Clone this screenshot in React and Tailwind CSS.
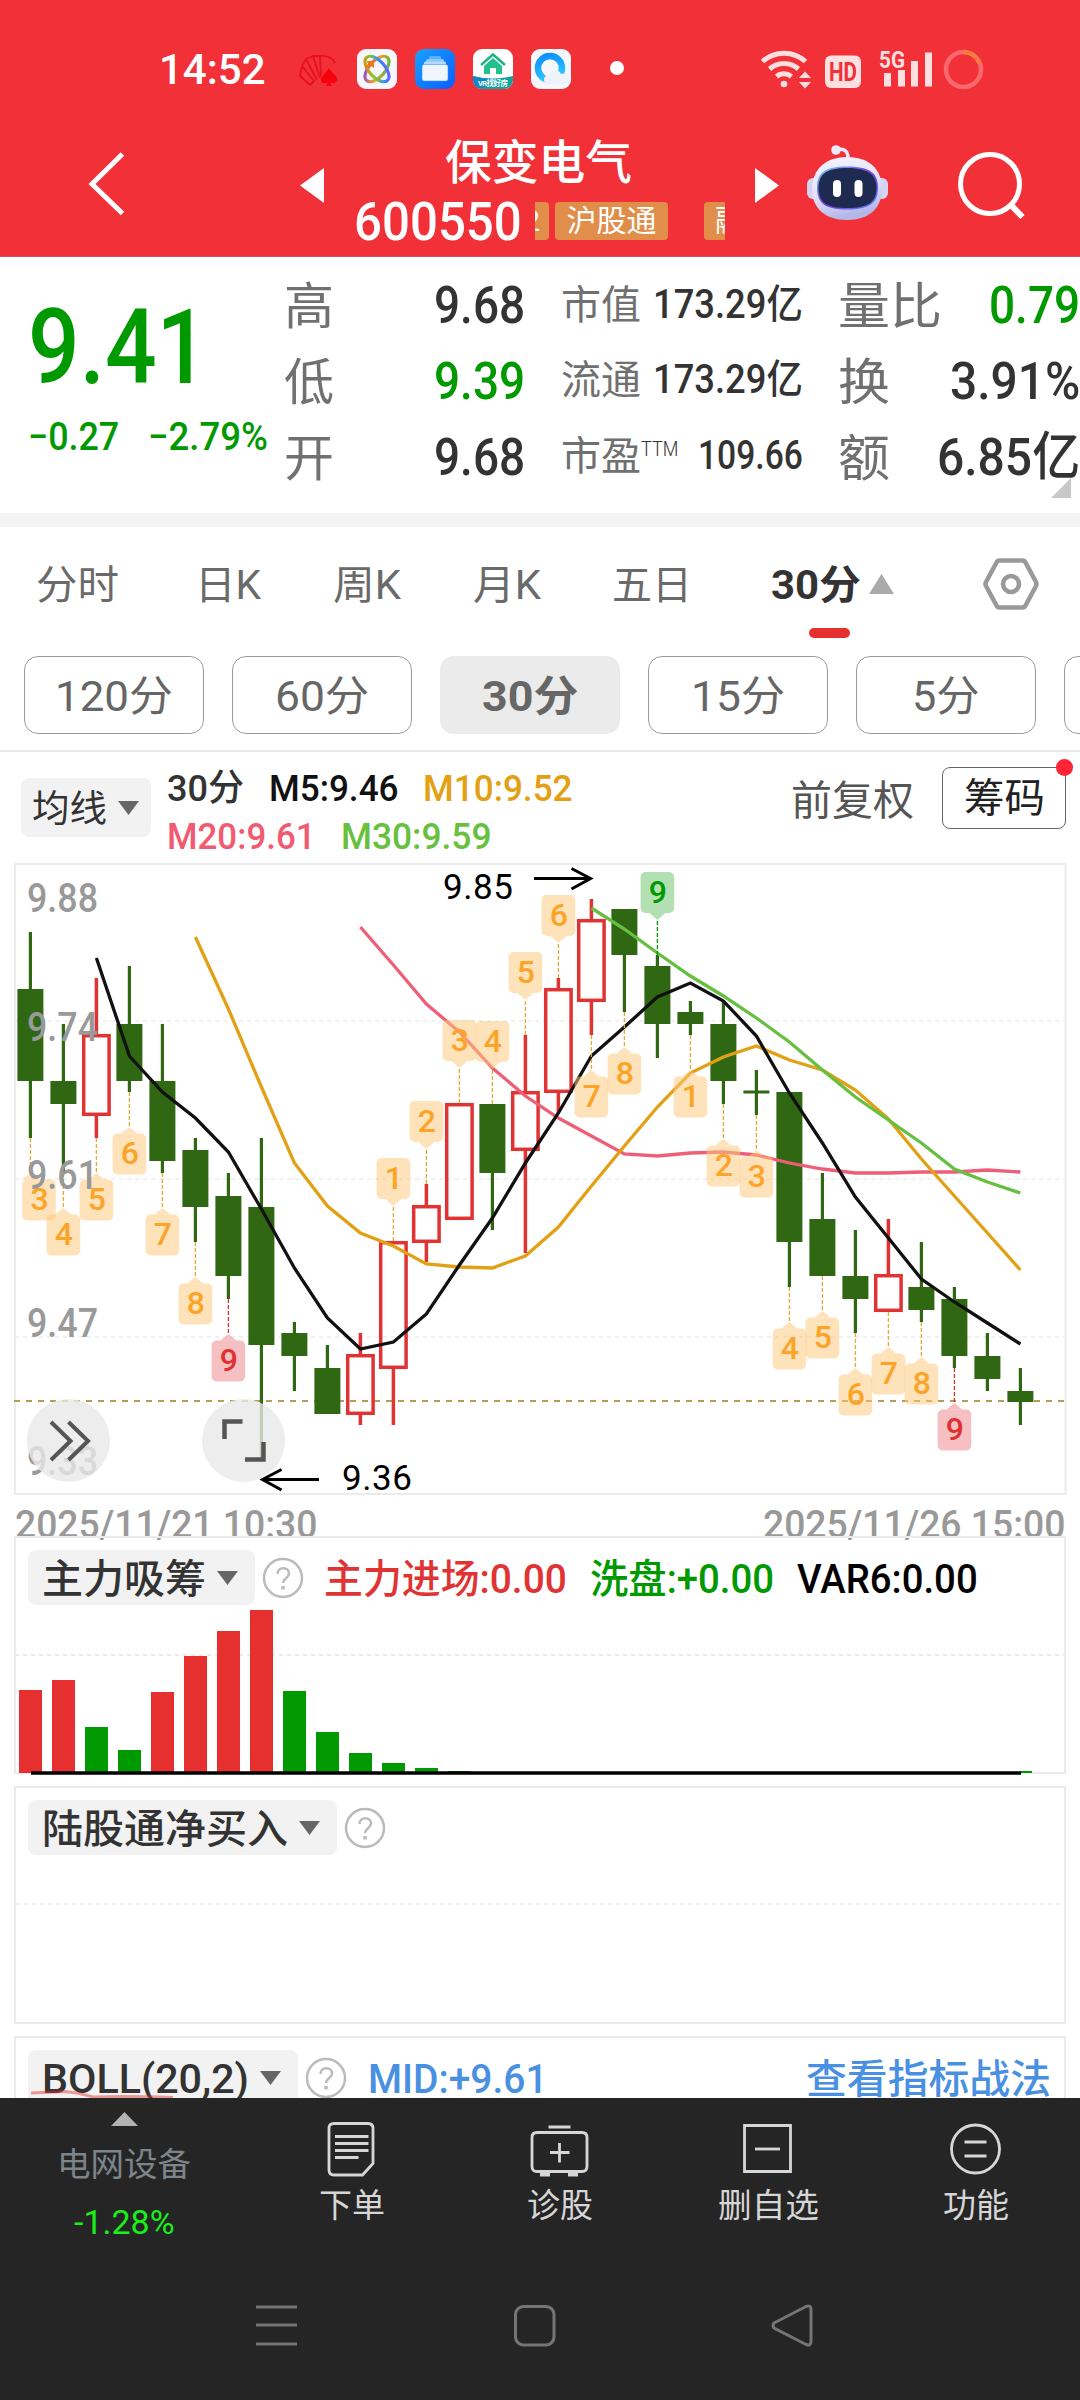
import { useLayoutEffect, useRef, useState } from 'react';
import { clsx } from 'clsx';

// squeezes a line of text into a fixed width, like the condensed DIN numerals of the app
const Fit = ({ w, className, children }) => {
  const ref = useRef(null);
  const [scale, setScale] = useState(1);

  useLayoutEffect(() => {
    setScale(w / ref.current.offsetWidth);
  }, [w]);

  return (
    <span className={clsx('block shrink-0 leading-none', className)} style={{ width: w }}>
      <span ref={ref} className="inline-block origin-left whitespace-nowrap" style={{ transform: `translateY(1px) scaleX(${scale})` }}>
        {children}
      </span>
    </span>
  );
};

const StatusBar = () => (
  <div className="flex h-[138px] items-center pl-[159px]">
    <Fit w={107} className="text-[42px] font-medium text-white">14:52</Fit>
    <svg className="ml-[32px] h-[44px] w-[330px]" viewBox="298 48 330 44">
      <defs>
        <linearGradient id="card" x1="0" y1="0" x2="1" y2="1">
          <stop offset="0" stopColor="#16a3ff" />
          <stop offset="1" stopColor="#0a5cff" />
        </linearGradient>
        <linearGradient id="rainbow" x1="0" y1="0" x2="1" y2="1">
          <stop offset="0" stopColor="#ff7a1a" />
          <stop offset="0.35" stopColor="#8bc926" />
          <stop offset="0.65" stopColor="#2f8cff" />
          <stop offset="1" stopColor="#8a4bff" />
        </linearGradient>
        <linearGradient id="rainbow2" x1="1" y1="0" x2="0" y2="1">
          <stop offset="0" stopColor="#2fc04b" />
          <stop offset="0.5" stopColor="#f0a020" />
          <stop offset="1" stopColor="#7a3cff" />
        </linearGradient>
        <linearGradient id="ring" x1="0" y1="0" x2="0.3" y2="1">
          <stop offset="0" stopColor="#0a8dff" />
          <stop offset="1" stopColor="#2fc6ff" />
        </linearGradient>
        <clipPath id="vr"><rect x="473" y="50" width="40" height="40" rx="9" /></clipPath>
      </defs>
      <g stroke="#e8101a" fill="none" strokeWidth="1.800" strokeLinejoin="round">
        <path d="M300 77l2-10 12 15-4 4zM302 67l4-7 11 21M306 60l7-3 7 22M313 57l7 0 1 20M320 57c8-1 13 3 15 7" />
        <path d="M329 69c-3 5-8 8-8 12 0 4 5 4 7 2l-2 4h6l-2-4c3 2 7 1 7-3 0-4-6-6-8-11z" fill="#f5000c" stroke="none" />
      </g>
      <rect x="357" y="50" width="40" height="40" rx="9" fill="#f7f7fb" />
      <g fill="none" strokeWidth="3.200">
        <ellipse cx="377" cy="70" rx="8" ry="15.500" transform="rotate(42 377 70)" stroke="url(#rainbow2)" />
        <ellipse cx="377" cy="70" rx="8" ry="15.500" transform="rotate(-42 377 70)" stroke="url(#rainbow)" />
      </g>
      <path d="M367 62h7v7l-3-2-4 3-2-2 3-3z" fill="#f07818" />
      <rect x="415" y="50" width="40" height="40" rx="9" fill="url(#card)" />
      <rect x="429" y="57" width="12" height="4" rx="1.5" fill="#5fb2ff" />
      <rect x="426" y="60" width="18" height="4" rx="1.500" fill="#8cc6ff" />
      <rect x="424" y="62.500" width="22" height="4" rx="1.500" fill="#b5daff" />
      <rect x="422" y="65.500" width="26" height="16.500" rx="2" fill="#f0f6ff" stroke="#3c90ff" strokeWidth="0.600" />
      <g clipPath="url(#vr)">
        <rect x="473" y="50" width="40" height="40" fill="#fff" />
        <path d="M473 77q20 5 40 0v14h-40z" fill="#12a3a0" />
        <path d="M473 77q9 3 18 3l-10 10h-8z" fill="#1287c8" />
        <path d="M481 66l12-10.500 12 10.500" fill="none" stroke="#22b184" strokeWidth="2.500" />
        <path d="M493 59l9 8v8h-6v-6h-6v6h-6v-8z" fill="#22c08a" />
        <text x="493" y="87" textAnchor="middle" textLength="30" fontSize="7.500" fontWeight="700" fill="#fff">VR找好房</text>
      </g>
      <rect x="531" y="50" width="40" height="40" rx="9" fill="#f4f7fb" />
      <circle cx="550" cy="69" r="12" fill="none" stroke="url(#ring)" strokeWidth="6.500" />
      <path d="M548 85c-6-1-5-9 1-9 2-6 9-7 12-1 6-1 9 2 9 6 0 3-3 4-6 4z" fill="#eef3fb" />
      <circle cx="617" cy="69" r="7" fill="#fff" />
    </svg>
    <svg className="ml-[132px] h-[44px] w-[226px]" viewBox="760 46 226 44">
      <g fill="none" stroke="#ffdfe0" strokeWidth="5">
        <path d="M762.500 60.500a32 32 0 0 1 43 0" />
        <path d="M769.500 68a22 22 0 0 1 29 0" />
        <path d="M776.500 75.500a12 12 0 0 1 15 0" />
      </g>
      <circle cx="784" cy="83" r="3.300" fill="#ffdfe0" />
      <path d="M805 70.500l6 6.500h-12zM805 87.500l6-6.500h-12z" fill="#ffdfe0" />
      <rect x="825" y="54.500" width="36" height="32.500" rx="6" fill="#ffdfe0" />
      <text x="843" y="80" textAnchor="middle" fontSize="26" fontWeight="700" textLength="28" lengthAdjust="spacingAndGlyphs" fill="#f23038">HD</text>
      <text x="879" y="66.500" fontSize="24" fontWeight="700" textLength="26" lengthAdjust="spacingAndGlyphs" fill="#ffdfe0">5G</text>
      <path d="M884 72h7v13.500h-7zM898 69h7v16.500h-7zM911 60h7v25.500h-7zM925 51.500h7v34h-7z" fill="#ffdfe0" />
      <circle cx="963.500" cy="68.500" r="17.500" fill="none" stroke="#f7696f" strokeWidth="4.500" />
      <path d="M963.500 51a17.500 17.500 0 0 1 15.800 11" fill="none" stroke="#fb7a42" strokeWidth="4.500" />
    </svg>
  </div>
);

const Robot = () => (
  <svg className="h-[78px] w-[84px]" viewBox="806 143 84 78">
    <defs>
      <linearGradient id="head" x1="0" y1="0" x2="0.300" y2="1">
        <stop offset="0" stopColor="#f6f5ff" />
        <stop offset="0.600" stopColor="#e2e1fa" />
        <stop offset="1" stopColor="#b4b8e8" />
      </linearGradient>
      <linearGradient id="visor" x1="0" y1="0" x2="1" y2="1">
        <stop offset="0" stopColor="#6fd0ee" />
        <stop offset="0.500" stopColor="#7b3fe0" />
        <stop offset="1" stopColor="#5a78f0" />
      </linearGradient>
    </defs>
    <path d="M836 150c7-2 12 0 12 8" fill="none" stroke="#ece9fb" strokeWidth="3.500" />
    <circle cx="836" cy="150" r="4.800" fill="#ece9fb" />
    <rect x="807" y="178" width="14" height="21" rx="6" fill="#d3d3f2" />
    <rect x="874" y="178" width="14" height="21" rx="6" fill="#d3d3f2" />
    <path d="M847 157c24 0 35 14 35 32 0 19-13 31-35 31s-35-12-35-31c0-18 12-32 35-32z" fill="url(#head)" />
    <path d="M847 166.500c22 0 31 6 31 21 0 16-9 22-31 22s-30-6-30-22c0-15 8-21 30-21z" fill="url(#visor)" />
    <path d="M847 168c20 0 29.500 6 29.500 20 0 14.500-9 20-29.500 20s-28.500-5.500-28.500-20c0-14 8-20 28.500-20z" fill="#1f2a50" />
    <rect x="833" y="180" width="8" height="17" rx="4" fill="#fff" />
    <rect x="854.500" y="180" width="8" height="17" rx="4" fill="#fff" />
  </svg>
);

const Header = () => (
  <header className="h-[257px] shrink-0 border-b border-[#c9555a] bg-[#f23038] text-white">
    <StatusBar />
    <div className="flex h-[96px] items-start">
      <svg className="mt-[13px] ml-[86px] h-[66px] w-[40px]" viewBox="86 151 40 66">
        <path d="M122.500 154L92 184l30.500 29.500" fill="none" stroke="#fff" strokeWidth="5" />
      </svg>
      <svg className="mt-[30px] ml-[174px] h-[35px] w-[24px]" viewBox="0 0 24 35"><path d="M24 0v35L0 17.500z" fill="#fff" /></svg>
      <div className="ml-[30px] flex w-[372px] flex-col">
        <div className="flex h-[46px] items-center pl-[91px]">
          <Fit w={187} className="text-[47px] font-medium">保变电气</Fit>
        </div>
        <div className="flex h-[74px] items-center">
          <Fit w={168} className="text-[53px] font-medium">600550</Fit>
          <div className="ml-[13px] flex h-[38px] w-[190px] overflow-hidden text-[30px] leading-[38px]">
            <span className="flex w-[14px] shrink-0 justify-end rounded-r-[4px] bg-[#e08e4a] pr-[9px]">2</span>
            <span className="ml-[6px] w-[113px] shrink-0 rounded-[4px] bg-[#e08e4a] text-center">沪股通</span>
            <span className="ml-[36px] w-[113px] shrink-0 rounded-[4px] bg-[#e08e4a] pl-[11px]">融资</span>
          </div>
        </div>
      </div>
      <svg className="mt-[30px] ml-[29px] h-[35px] w-[24px]" viewBox="0 0 24 35"><path d="M0 0v35l24-17.500z" fill="#fff" /></svg>
      <div className="mt-[5px] ml-[27px]"><Robot /></div>
      <svg className="mt-[12px] ml-[66px] h-[70px] w-[70px]" viewBox="956 150 70 70">
        <circle cx="990" cy="184" r="29.500" fill="none" stroke="#fff" strokeWidth="5" />
        <path d="M1011 205l11.500 12" stroke="#fff" strokeWidth="6" />
      </svg>
    </div>
  </header>
);

const Label = ({ w, children }) => <Fit w={w} className="translate-y-px text-[50px] font-normal text-[#707070]">{children}</Fit>;
const SmallLabel = ({ w, children }) => <Fit w={w} className="translate-y-px text-[40px] font-normal text-[#707070]">{children}</Fit>;

const Quote = () => (
  <section className="relative flex h-[256px] shrink-0 pt-[10px] font-medium text-[#333]">
    <div className="flex w-[284px] flex-col pl-[28px] text-[#009900]">
      <Fit w={180} className="mt-[28px] text-[104px]">9.41</Fit>
      <div className="mt-[18px] flex text-[39px]">
        <Fit w={91}>−0.27</Fit>
        <Fit w={120} className="ml-[29px]">−2.79%</Fit>
      </div>
    </div>
    <div className="w-[277px] text-[52px]">
      <div className="flex h-[76px] items-center"><Label w={50}>高</Label><Fit w={91} className="ml-[100px]">9.68</Fit></div>
      <div className="flex h-[76px] items-center"><Label w={50}>低</Label><Fit w={91} className="ml-[100px] text-[#009900]">9.39</Fit></div>
      <div className="flex h-[76px] items-center"><Label w={50}>开</Label><Fit w={91} className="ml-[100px]">9.68</Fit></div>
    </div>
    <div className="w-[277px] text-[40px]">
      <div className="flex h-[73px] items-center"><SmallLabel w={80}>市值</SmallLabel><Fit w={150} className="ml-[12px]">173.29亿</Fit></div>
      <div className="flex h-[77px] items-center"><SmallLabel w={80}>流通</SmallLabel><Fit w={150} className="ml-[12px]">173.29亿</Fit></div>
      <div className="flex h-[75px] items-center">
        <SmallLabel w={80}>市盈</SmallLabel>
        <Fit w={37} className="-mt-[14px] text-[20px] font-light">TTM</Fit>
        <Fit w={105} className="ml-[20px]">109.66</Fit>
      </div>
    </div>
    <div className="w-[242px] text-[52px]">
      <div className="flex h-[76px] items-center justify-between"><Label w={104}>量比</Label><Fit w={91} className="text-[#009900]">0.79</Fit></div>
      <div className="flex h-[76px] items-center justify-between"><Label w={52}>换</Label><Fit w={130}>3.91%</Fit></div>
      <div className="flex h-[76px] items-center justify-between"><Label w={52}>额</Label><Fit w={143}>6.85亿</Fit></div>
    </div>
    <svg className="absolute top-[221px] left-[1051px] h-[20px] w-[20px]" viewBox="0 0 20 20"><path d="M20 0v20H0z" fill="#c8c8c8" /></svg>
  </section>
);

const Tabs = () => (
  <section className="h-[239px] shrink-0 border-t-[14px] border-b-2 border-t-[#f4f4f4] border-b-[#e8e8e8]">
    <div className="flex h-[114px] items-center pl-[36px] text-[40px] text-[#6a6a6a]">
      <Fit w={83} className="translate-y-px">分时</Fit>
      <Fit w={66} className="ml-[76px] translate-y-px">日K</Fit>
      <Fit w={68} className="ml-[72px] translate-y-px">周K</Fit>
      <Fit w={68} className="ml-[72px] translate-y-px">月K</Fit>
      <Fit w={80} className="ml-[71px] translate-y-px">五日</Fit>
      <Fit w={90} className="ml-[79px] translate-y-px font-bold text-[#333]">30分</Fit>
      <svg className="ml-[8px] h-[20px] w-[25px]" viewBox="0 0 25 20"><path d="M12.500 0L25 20H0z" fill="#aaa" /></svg>
      <svg className="ml-[89px] h-[54px] w-[56px]" viewBox="0 0 56 54" fill="none" stroke="#999" strokeWidth="4.500">
        <path d="M16.500 3.500h23q2 0 3 2L53 25q1 2 0 4L42.500 48.500q-1 2-3 2h-23q-2 0-3-2L3 29q-1-2 0-4L13.500 5.500q1-2 3-2z" />
        <circle cx="28" cy="27" r="8" />
      </svg>
    </div>
    <div className="-mt-[13px] ml-[809px] h-[10px] w-[41px] rounded-full bg-[#e63030]" />
    <div className="mt-[18px] flex gap-[28px] overflow-hidden pl-[24px] text-[42px] text-[#666]">
      {[['120分', 118], ['60分', 94], ['30分', 96], ['15分', 94], ['5分', 68], ['1分', 68]].map(([name, w]) => (
        <div
          key={name}
          className={clsx(
            'flex h-[78px] w-[180px] shrink-0 items-center justify-center rounded-[14px]',
            name === '30分' ? 'bg-[#ebebeb] font-bold' : 'border-[1.5px] border-[#999]'
          )}
        >
          <Fit w={w} className="translate-y-px">{name}</Fit>
        </div>
      ))}
    </div>
  </section>
);

const Caret = ({ className }) => (
  <svg className={clsx('h-[14px] w-[21px] shrink-0', className)} viewBox="0 0 21 14"><path d="M0 0h21L10.500 14z" fill="#666" /></svg>
);

const Averages = () => (
  <section className="flex h-[111px] shrink-0 items-start font-medium">
    <div className="mt-[26px] ml-[21px] flex h-[59px] w-[130px] items-center rounded-[8px] bg-[#f2f2f2] pl-[11px] text-[37px] font-normal text-[#333]">
      <Fit w={75} className="translate-y-px">均线</Fit>
      <Caret className="ml-[11px]" />
    </div>
    <div className="ml-[16px] w-[624px] text-[37px]">
      <div className="mt-[11px] flex h-[48px] items-center">
        <Fit w={77} className="text-[#333]">30分</Fit>
        <Fit w={130} className="ml-[25px] text-[#111]">M5:9.46</Fit>
        <Fit w={150} className="ml-[24px] text-[#e49f13]">M10:9.52</Fit>
      </div>
      <div className="flex h-[48px] items-center">
        <Fit w={149} className="text-[#f05b72]">M20:9.61</Fit>
        <Fit w={151} className="ml-[25px] text-[#68c03f]">M30:9.59</Fit>
      </div>
    </div>
    <Fit w={123} className="mt-[28px] text-[41px] font-normal text-[#555]">前复权</Fit>
    <div className="relative mt-[15px] ml-[28px] flex h-[62px] w-[124px] items-center justify-center rounded-[8px] border-[1.5px] border-[#666] text-[40px] font-normal text-[#222]">
      <Fit w={81}>筹码</Fit>
      <span className="absolute -top-[9px] -right-[8px] h-[17px] w-[17px] rounded-full bg-[#ff2436]" />
    </div>
  </section>
);

// high, body top, body bottom, low in chart pixels; u = rising
const candles = [
  [932, 989, 1081, 1138], [1024, 1081, 1104, 1173], [978, 1034, 1116, 1138, 'u'], [966, 1024, 1081, 1092],
  [1024, 1081, 1161, 1173], [1138, 1150, 1207, 1242], [1173, 1196, 1276, 1299], [1138, 1207, 1345, 1459],
  [1322, 1333, 1356, 1391], [1345, 1368, 1414, 1414], [1333, 1354, 1415, 1425, 'u'], [1241, 1241, 1369, 1425, 'u'],
  [1184, 1205, 1243, 1262, 'u'], [1103, 1103, 1220, 1220, 'u'], [1104, 1104, 1173, 1230], [1035, 1091, 1151, 1253, 'u'],
  [978, 988, 1093, 1113, 'u'], [899, 919, 1002, 1035, 'u'], [909, 909, 955, 1012], [955, 966, 1024, 1058],
  [1001, 1012, 1024, 1035], [1001, 1024, 1081, 1104], [1070, 1090.500, 1093.500, 1115], [1092, 1092, 1242, 1287],
  [1173, 1219, 1276, 1276], [1230, 1276, 1299, 1333], [1219, 1274, 1312, 1312, 'u'], [1242, 1287, 1310, 1322],
  [1287, 1299, 1356, 1368], [1333, 1356, 1379, 1391], [1368, 1391, 1402, 1425],
];

const averages = [
  { color: '#ee5f77', from: 10, ys: [927, 965, 1004, 1032, 1068, 1096, 1118, 1136, 1154, 1156, 1153, 1152, 1155, 1163, 1169, 1173, 1173, 1172, 1172, 1170, 1172] },
  { color: '#e2a015', from: 5, ys: [937, 1009, 1087, 1163, 1206, 1233, 1246, 1264, 1267, 1268, 1256, 1227, 1186, 1146, 1107, 1073, 1057, 1046, 1060, 1070, 1090, 1119, 1159, 1196, 1233, 1270] },
  { color: '#111', from: 2, ys: [958, 1056, 1092, 1118, 1152, 1209, 1268, 1318, 1349, 1342, 1314, 1265, 1218, 1163, 1113, 1056, 1027, 997, 983, 1001, 1036, 1093, 1143, 1197, 1238, 1279, 1302, 1323, 1344] },
  { color: '#66bf40', from: 17, ys: [908, 929, 953, 976, 996, 1018, 1042, 1070, 1097, 1120, 1143, 1169, 1182, 1193] },
];

// candle index, count, side
const counts = [
  [0, 3], [1, 4], [2, 5], [3, 6], [4, 7], [5, 8], [6, 9],
  [11, 1, 'top'], [12, 2, 'top'], [13, 3, 'top'], [14, 4, 'top'], [15, 5, 'top'], [16, 6, 'top'],
  [17, 7], [18, 8], [19, 9, 'top'], [20, 1], [21, 2], [22, 3], [23, 4], [24, 5], [25, 6], [26, 7], [27, 8], [28, 9],
];

const axis = [['9.88', 912], ['9.74', 1041], ['9.61', 1189], ['9.47', 1337], ['9.33', 1475]];

const cx = (i) => 30.4 + i * 33;

const Count = ({ i, n, side }) => {
  const top = side === 'top';
  const start = top ? candles[i][0] : candles[i][3];
  const tip = top ? start - 35 : start + 35;
  const y = top ? tip - 48 : tip + 6.5;
  const x = i === 0 ? 39 : cx(i);
  const color = n === 9 ? (top ? '#009900' : '#e03030') : '#fba428';
  const line = n === 9 ? color : '#e0a93a';
  const fill = n === 9 ? (top ? '#66c26880' : '#ee868a85') : '#fdc87c88';
  const edge = top ? y + 41 : y;
  return (
    <g>
      <line x1={cx(i)} x2={cx(i)} y1={start} y2={tip} stroke={line} strokeWidth="1.300" strokeDasharray="4 2" />
      <path d={`M${cx(i) - 8} ${edge}L${cx(i)} ${tip}L${cx(i) + 8} ${edge}z`} fill={fill} />
      <rect x={x - 16.8} y={y} width="33.600" height="41" rx="5" fill={fill} />
      <text x={x + 0.5} y={y + 30.5} textAnchor="middle" fontSize="32" fontWeight="500" fill={color}>{n}</text>
    </g>
  );
};

const Kline = () => (
  <section className="relative h-[632px] shrink-0">
    <svg className="block h-[632px] w-[1080px]" viewBox="0 863 1080 632">
      <rect x="15" y="864" width="1050.500" height="630" fill="none" stroke="#ebebeb" strokeWidth="2" />
      {[1021, 1179, 1337].map((y) => (
        <line key={y} x1="15" x2="1065" y1={y} y2={y} stroke="#ebebeb" strokeWidth="1.500" strokeDasharray="4 4" />
      ))}
      <line x1="14" x2="1065" y1="1401" y2="1401" stroke="#b99a58" strokeWidth="2" strokeDasharray="6 6" />
      {candles.map(([hi, top, bottom, lo, up], i) =>
        up ? (
          <g key={i} stroke="#e03434" strokeWidth="3.500" fill="none">
            <path d={`M${cx(i)} ${hi}V${top}M${cx(i)} ${bottom}V${lo}`} />
            <rect x={cx(i) - 12.7} y={top + 1.7} width="25.400" height={bottom - top - 3.4} />
          </g>
        ) : (
          <g key={i} fill="#306713">
            <rect x={cx(i) - 1.6} y={hi} width="3.200" height={lo - hi} />
            <rect x={cx(i) - 13} y={top} width="26" height={bottom - top} />
          </g>
        )
      )}
      {averages.map(({ color, from, ys }) => (
        <polyline key={color} points={ys.map((y, k) => `${cx(from + k)},${y}`).join(' ')} fill="none" stroke={color} strokeWidth="3.300" />
      ))}
      {counts.map(([i, n, side]) => <Count key={i} i={i} n={n} side={side} />)}
      {axis.map(([t, y]) => (
        <text key={t} x="27" y={y} fontSize="41" fontWeight="500" fill="#999" textLength="71" lengthAdjust="spacingAndGlyphs">{t}</text>
      ))}
      <text x="443" y="899" fontSize="35" textLength="70" fill="#000">9.85</text>
      <text x="342" y="1490" fontSize="35" textLength="70" fill="#000">9.36</text>
      <path d="M534 878.500h56M571.500 868.500l19 10-19 10.500M319 1479.500h-56M281.500 1469.500l-19 10 19 10.500" fill="none" stroke="#000" strokeWidth="3" />
    </svg>
    <button className="absolute top-[536px] left-[27px] h-[83px] w-[83px] rounded-full bg-[#e8e8e8]/80">
      <svg className="h-[83px] w-[83px]" viewBox="27 1399 83 83" fill="none" stroke="#555" strokeWidth="4">
        <path d="M51 1422l19.500 19L51 1460M68.500 1422l19.500 19-19.500 19" />
      </svg>
    </button>
    <button className="absolute top-[536px] left-[202px] h-[83px] w-[83px] rounded-full bg-[#e8e8e8]/80">
      <svg className="h-[83px] w-[83px]" viewBox="202 1399 83 83" fill="none" stroke="#555" strokeWidth="4.500">
        <path d="M224.500 1439v-17.500h18M263.500 1442v17.500h-18.500" />
      </svg>
    </button>
  </section>
);

const Help = () => (
  <svg className="ml-[7px] h-[42px] w-[42px] shrink-0" viewBox="0 0 42 42" fill="none" stroke="#bbb" strokeWidth="2.500">
    <circle cx="21" cy="21" r="19" />
    <path d="M15.500 17c0-8 11.500-7.500 11.500-.5 0 4.500-6 5-6 9.500" />
    <path d="M21 29v3.500" strokeWidth="3.500" />
  </svg>
);

const Picker = ({ w, children }) => (
  <>
    <div className="ml-[12px] flex h-[55px] shrink-0 items-center rounded-[8px] bg-[#f2f2f2] pr-[17px] pl-[14px] text-[#333]">
      <Fit w={w} className="translate-y-px">{children}</Fit>
      <Caret className="ml-[11px]" />
    </div>
    <Help />
  </>
);

const bars = [1690, 1680, 1727, 1750, 1692, 1656, 1631, 1610, 1691, 1732, 1753, 1763, 1768, 1771];
const redBars = [0, 1, 4, 5, 6, 7];

const Indicators = () => (
  <section className="flex h-[603px] shrink-0 flex-col overflow-hidden px-[14px] text-[40px] font-medium">
    <div className="flex h-[41px] shrink-0 items-center justify-between px-px pt-[17px] text-[#999]">
      <Fit w={302} className="relative text-[39px]">2025/11/21 10:30</Fit>
      <Fit w={302} className="relative text-[39px]">2025/11/26 15:00</Fit>
    </div>
    <div className="relative h-[238px] shrink-0 border-2 border-[#ebebeb]">
      <div className="mt-[12px] flex h-[55px] items-center">
        <Picker w={164}>主力吸筹</Picker>
        <Fit w={243} className="ml-[20px] translate-y-px text-[#e03434]">主力进场:0.00</Fit>
        <Fit w={184} className="ml-[23px] translate-y-px text-[#009900]">洗盘:+0.00</Fit>
        <Fit w={181} className="ml-[23px] translate-y-px text-black">VAR6:0.00</Fit>
      </div>
      <svg className="absolute top-[70px] -left-[2px] h-[170px] w-[1052px]" viewBox="14 1608 1052 170">
        <line x1="15" x2="1065" y1="1655" y2="1655" stroke="#ebebeb" strokeWidth="2" strokeDasharray="4 4" />
        {bars.map((y, i) => (
          <rect key={i} x={19 + i * 33} y={y} width="23" height={1773 - y} fill={redBars.includes(i) ? '#e63030' : '#009900'} />
        ))}
        <path d="M1020 1772h12" stroke="#009900" strokeWidth="2" />
        <path d="M31 1773h990" stroke="#000" strokeWidth="3.500" />
      </svg>
    </div>
    <div className="mt-[12px] h-[238px] shrink-0 border-2 border-[#ebebeb]">
      <div className="mt-[12px] flex h-[55px] items-center">
        <Picker w={246}>陆股通净买入</Picker>
      </div>
      <svg className="mt-[48px] block h-[2px] w-full"><line x1="0" x2="1050" y1="1" y2="1" stroke="#ebebeb" strokeWidth="2" strokeDasharray="4 4" /></svg>
    </div>
    <div className="relative mt-[12px] h-[240px] shrink-0 border-2 border-[#ebebeb]">
      <div className="mt-[12px] flex h-[55px] items-center">
        <Picker w={207}>BOLL(20,2)</Picker>
        <Fit w={180} className="ml-[21px] translate-y-px text-[#4a90e2]">MID:+9.61</Fit>
        <Fit w={245} className="mr-[13px] ml-auto translate-y-px text-[#4a90e2]">查看指标战法</Fit>
      </div>
      <svg className="absolute top-[48px] left-[14px] h-[14px] w-[160px]" viewBox="30 2087 160 14">
        <path d="M31 2094l34-1.500q14 1 28 5.500 34-1 80 .5" fill="none" stroke="#e6303077" strokeWidth="3" />
      </svg>
    </div>
  </section>
);

const actions = [
  {
    name: '下单', w: 66,
    icon: (
      <>
        <path d="M12 4.500h34q5 0 5 5v35L40.500 56H12q-5 0-5-5V9.500q0-5 5-5z" />
        <path d="M13 17.500h33.500M13 24.500h33.500M13 31.500h33.500M13 38.500h23.500" />
      </>
    ),
  },
  {
    name: '诊股', w: 66,
    icon: (
      <>
        <path d="M18.500 8h22M7 13.500h45q5 0 5 5v29q0 5-5 5H7q-5 0-5-5v-29q0-5 5-5z" />
        <path d="M20 33.500h19.500M29.500 24v19.500" />
        <path d="M10 55.500h10M38 55.500h10" strokeWidth="4" />
      </>
    ),
  },
  {
    name: '删自选', w: 101,
    icon: (
      <>
        <path d="M6.500 6.500h46v46h-46z" />
        <path d="M17 30h25" />
      </>
    ),
  },
  {
    name: '功能', w: 66,
    icon: (
      <>
        <circle cx="29.500" cy="30" r="24" />
        <path d="M18.500 23h22M18.500 37h22" />
      </>
    ),
  },
];

const BottomBar = () => (
  <footer className="flex grow flex-col bg-[#252525]">
    <div className="flex">
      <div className="flex w-[248px] flex-col items-center pt-[14px]">
        <svg className="h-[14px] w-[27px]" viewBox="0 0 27 14"><path d="M13.500 0L27 14H0z" fill="#b3b3b3" /></svg>
        <Fit w={134} className="mt-[21px] text-[33px] text-[#7d858b]">电网设备</Fit>
        <Fit w={101} className="mt-[25px] text-[33px] text-[#19f019]">-1.28%</Fit>
      </div>
      {actions.map(({ name, w, icon }) => (
        <div key={name} className="flex w-[208px] flex-col items-center pt-[21px]">
          <svg className="h-[60px] w-[60px]" viewBox="0 0 60 60" fill="none" stroke="#d6d6d6" strokeWidth="2.800">{icon}</svg>
          <Fit w={w} className="mt-[9px] text-[33px] text-[#d6d6d6]">{name}</Fit>
        </div>
      ))}
    </div>
    <svg className="mt-auto mb-[52px] ml-[254px] h-[46px] w-[562px]" viewBox="254 2302 562 46" fill="none" stroke="#757575" strokeWidth="3">
      <path d="M256 2307h41M256 2325h41M256 2344h41" />
      <rect x="515.500" y="2306.500" width="38.500" height="38.500" rx="8" />
      <path d="M774 2323l32-16.500q5-2 5 3v32q0 5-5 3L774 2328q-2-2.500 0-5z" />
    </svg>
  </footer>
);

const App = () => (
  <div className="flex h-[2400px] w-[1080px] flex-col overflow-hidden bg-white font-['Roboto','Noto_Sans_CJK_SC',sans-serif]">
    <Header />
    <Quote />
    <Tabs />
    <Averages />
    <Kline />
    <Indicators />
    <BottomBar />
  </div>
);

export default App;
